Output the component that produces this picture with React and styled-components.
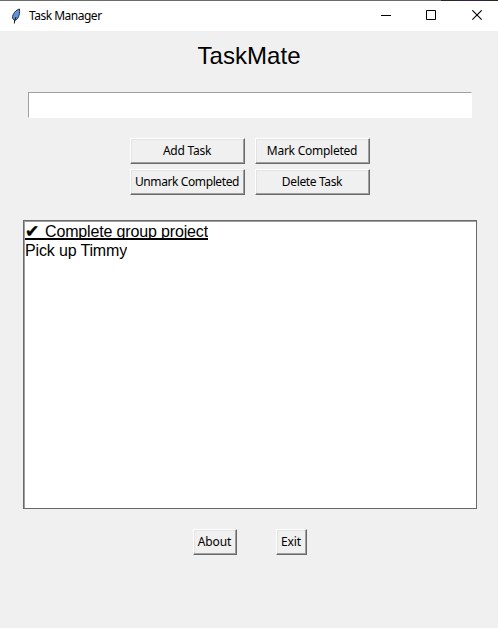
import React from "react";
import styled, { createGlobalStyle } from "styled-components";

const Global = createGlobalStyle`
  * { box-sizing: border-box; }
  body { margin: 0; background: #f0f0f0; overflow: hidden; }
`;

const Window = styled.main`
  width: 498px;
  height: 628px;
  display: flex;
  flex-direction: column;
  background: #f0f0f0;
  color: #000;
  font-family: "Noto Sans", "Open Sans", sans-serif;
`;

const TitleBar = styled.header`
  height: 31px;
  flex: none;
  display: flex;
  align-items: center;
  padding-left: 9px;
  background: linear-gradient(90deg, #6b6b6b 441px, #29262d 441px 460px, #35204d 460px 484px, #29262d 484px) top / 100% 1px no-repeat #fff;
`;

const Caption = styled.span`
  flex: 1;
  margin-left: 6px;
  font-size: 12px;
  line-height: 16px;
  letter-spacing: -0.5px;
`;

const CaptionButton = styled.button`
  width: 45px;
  height: 30px;
  padding: 0;
  border: 0;
  background: none;
  display: grid;
  place-items: center;
  &:last-child { margin-right: -1px; padding-left: 2px; }
`;

const Heading = styled.h1`
  margin: 9px 0 0;
  height: 32px;
  text-align: center;
  font: 400 24px/32px "Liberation Sans", Arial, sans-serif;
  letter-spacing: 0.05px;
`;

const Entry = styled.input`
  width: 444px;
  height: 26px;
  margin: 20px 0 0 28px;
  flex: none;
  padding: 0 4px;
  outline: 0;
  border: 1px solid;
  border-color: #a0a0a0 #fff #fff #a0a0a0;
  background: #fff;
`;

const Actions = styled.div`
  display: grid;
  grid-template-columns: 115px 115px;
  gap: 5px 10px;
  margin: 20px 0 0 130px;
`;

const Button = styled.button`
  height: 26px;
  width: ${(p) => p.$width || 115}px;
  padding: 0 1px 0 0;
  border: 1px solid;
  border-color: #fff #696969 #696969 #fff;
  box-shadow: inset -1px -1px #a0a0a0, inset 1px 1px #e3e3e3;
  background: #f0f0f0;
  color: #000;
  font: 12px/22px "Noto Sans", "Open Sans", sans-serif;
  letter-spacing: ${(p) => p.$tracking || 0}px;
  white-space: nowrap;
`;

const TaskList = styled.ul`
  width: 454px;
  height: 289px;
  flex: none;
  margin: 25px 0 0 23px;
  padding: 1px;
  list-style: none;
  border: 1px solid #696969;
  box-shadow: inset 1px 1px #a0a0a0;
  background: #fff;
  font: 16px/19px "Liberation Sans", Arial, sans-serif;
  letter-spacing: -0.15px;
`;

const Task = styled.li`
  display: flex;
  width: max-content;
  height: ${(p) => (p.$done ? 18 : 19)}px;
  overflow: hidden;
  border-bottom: ${(p) => (p.$done ? "2px solid #000" : "0")};
  margin-bottom: ${(p) => (p.$done ? 1 : 0)}px;
`;

const Check = styled.span`
  width: 20px;
  height: 16px;
  font: 17px/18px "DejaVu Sans", sans-serif;
  -webkit-text-stroke: 0.4px #000;
`;

const Footer = styled.footer`
  display: flex;
  gap: 39px;
  margin: 20px 0 0 193px;
`;

const Feather = () => (
  <svg width="14" height="18" viewBox="0 0 14 18">
    <path d="M10.5 2C7 3 3.500 6.500 3.500 11l2 2.500c3.500-1 5.500-5 5-11.500z" fill="#5b95dc" stroke="#26303c" />
    <path d="M7 10C6 12 5.500 14 5.300 16.500" fill="none" stroke="#101820" />
  </svg>
);

export default function App() {
  return (
    <Window>
      <Global />
      <TitleBar>
        <Feather />
        <Caption>Task Manager</Caption>
        <CaptionButton aria-label="Minimize">
          <svg width="11" height="11"><path d="M0 5.5h10" stroke="#000" /></svg>
        </CaptionButton>
        <CaptionButton aria-label="Maximize">
          <svg width="11" height="11"><path d="M.5.5h9v9h-9z" fill="none" stroke="#000" /></svg>
        </CaptionButton>
        <CaptionButton aria-label="Close">
          <svg width="11" height="11"><path d="M.3.3l9.4 9.4M9.7.3L.3 9.7" stroke="#000" strokeWidth="1.1" /></svg>
        </CaptionButton>
      </TitleBar>
      <Heading>TaskMate</Heading>
      <Entry aria-label="Task" />
      <Actions>
        <Button $tracking={-0.25}>Add Task</Button>
        <Button $tracking={-0.25}>Mark Completed</Button>
        <Button $tracking={-0.4}>Unmark Completed</Button>
        <Button $tracking={-0.35}>Delete Task</Button>
      </Actions>
      <TaskList>
        <Task $done><Check>✔</Check>Complete group project</Task>
        <Task>Pick up Timmy</Task>
      </TaskList>
      <Footer>
        <Button $width={44} $tracking={-0.1}>About</Button>
        <Button $width={31} $tracking={-0.1}>Exit</Button>
      </Footer>
    </Window>
  );
}
